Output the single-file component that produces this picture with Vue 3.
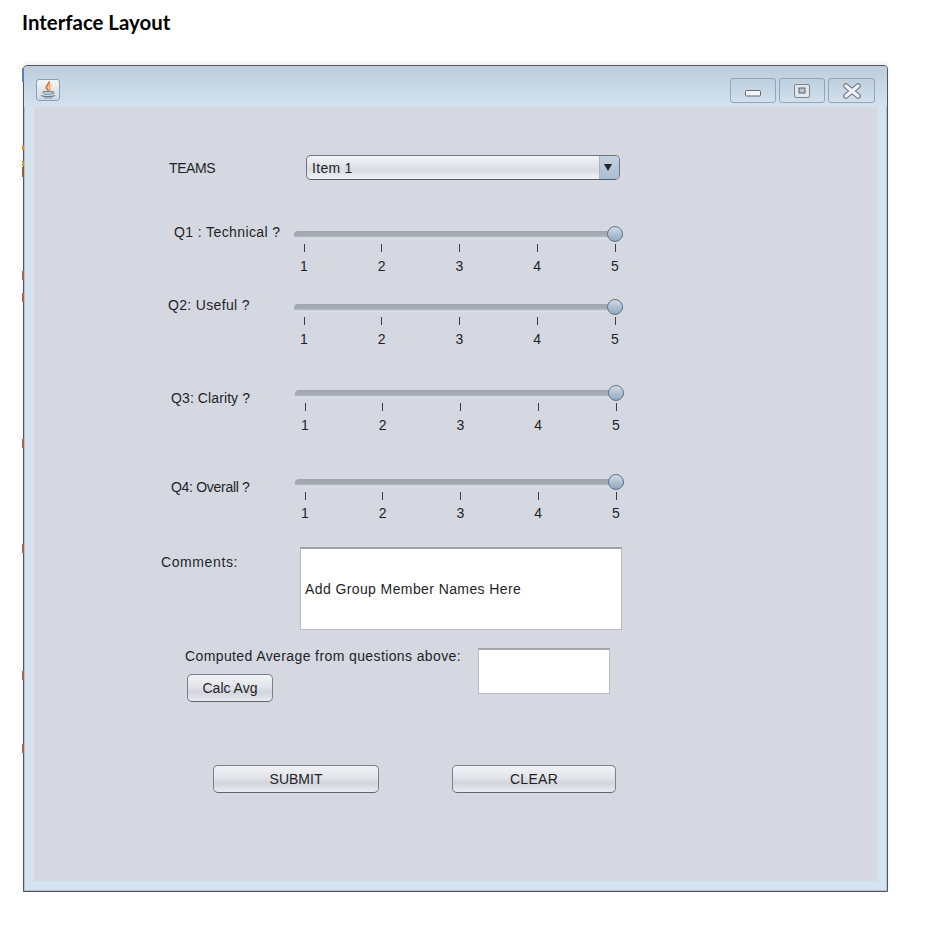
<template>
  <div class="page">
    <h1 class="heading">Interface Layout</h1>

    <div class="window">
      <!-- leftovers of the cropped picture behind the window -->
      <i
        v-for="s in specks"
        :key="s.y"
        class="speck"
        :style="{ top: s.y + 'px', height: s.h + 'px', background: s.color }"
      ></i>

      <div class="titlebar">
        <div class="app-icon">
          <svg width="20" height="20" viewBox="0 0 20 20">
            <path d="M11 1.500c1.500 2.500-3.500 3.500-2.500 6.500.4 1.200 1.700 1.500 1.700 3" fill="none" stroke="#e6762a" stroke-width="2" />
            <path d="M13.500 5c-2 1-3 1.500-2 3 .5.800.6 1.500.2 2.500" fill="none" stroke="#ee9a58" stroke-width="1.300" />
            <path d="M5 11.500h9.500c0 1.600-.8 2.500-2.200 2.700H7.200C5.800 14 5 13.100 5 11.500z" fill="#c3d1dc" stroke="#5f7f98" stroke-width=".9" />
            <path d="M14.500 11.800c2.400-.4 2.400 2.100-.6 2.300" fill="none" stroke="#5f7f98" stroke-width=".9" />
            <path d="M3 15.500c3 1.500 11 1.500 14 0" fill="none" stroke="#5f81a0" stroke-width="1.100" />
            <path d="M6 18h8" stroke="#7f9bb3" stroke-width="1.100" />
          </svg>
        </div>
        <div class="win-buttons">
          <button class="win-btn">
            <svg width="18" height="14" viewBox="0 0 18 14">
              <rect x="1.500" y="6.500" width="15" height="5.500" rx="1" fill="#f4f6f8" stroke="#5d6a76" />
            </svg>
          </button>
          <button class="win-btn">
            <svg width="18" height="16" viewBox="0 0 18 16">
              <rect x="1.500" y="1.500" width="15" height="13" rx="1.500" fill="#e4e7ea" stroke="#7a858f" />
              <rect x="6" y="5" width="6" height="5" fill="#b9c6d3" stroke="#56626e" />
            </svg>
          </button>
          <button class="win-btn close">
            <svg width="20" height="16" viewBox="0 0 20 16">
              <path d="M4 3l12 10M16 3L4 13" fill="none" stroke="#6a747e" stroke-width="5.500" stroke-linecap="round" />
              <path d="M4 3l12 10M16 3L4 13" fill="none" stroke="#eef0f3" stroke-width="3.500" stroke-linecap="round" />
            </svg>
          </button>
        </div>
      </div>

      <div class="content">
        <div class="row teams-row">
          <span class="teams-label">TEAMS</span>
          <div class="combo">
            <span class="combo-text">Item 1</span>
            <span class="combo-arrow"></span>
          </div>
        </div>

        <div v-for="q in questions" :key="q.cls" class="row question" :class="q.cls">
          <span class="q-label">{{ q.label }}</span>
          <div class="slider">
            <div class="track">
              <div class="thumb"></div>
            </div>
            <div class="ticks">
              <div v-for="n in 5" :key="n" class="tick">
                <i></i>
                <span>{{ n }}</span>
              </div>
            </div>
          </div>
        </div>

        <div class="row comments-row">
          <span class="comments-label">Comments:</span>
          <div class="comments-box">Add Group Member Names Here</div>
        </div>

        <div class="row average-row">
          <div class="average-left">
            <span class="average-label">Computed Average from questions above:</span>
            <button class="btn calc">Calc Avg</button>
          </div>
          <div class="average-box"></div>
        </div>

        <div class="row actions">
          <button class="btn submit">SUBMIT</button>
          <button class="btn clear">CLEAR</button>
        </div>
      </div>
    </div>
  </div>
</template>

<script setup>
const questions = [
  { cls: "q1", label: "Q1 : Technical ?" },
  { cls: "q2", label: "Q2: Useful ?" },
  { cls: "q3", label: "Q3: Clarity ?" },
  { cls: "q4", label: "Q4: Overall ?" },
];

const specks = [
  { y: 2, h: 14, color: "#5b83b0" },
  { y: 79, h: 5, color: "#d98a2e" },
  { y: 95, h: 5, color: "#b8a030" },
  { y: 101, h: 10, color: "#9a5a3a" },
  { y: 205, h: 9, color: "#a8674a" },
  { y: 227, h: 9, color: "#a8674a" },
  { y: 373, h: 9, color: "#a8674a" },
  { y: 478, h: 9, color: "#a8674a" },
  { y: 605, h: 9, color: "#a8674a" },
  { y: 678, h: 9, color: "#a8674a" },
];
</script>

<style>
html,
body {
  background: #fff;
}
</style>

<style scoped>
.page {
  width: 940px;
  height: 950px;
  padding: 10px 0 0 22px;
  box-sizing: border-box;
  font-family: "Liberation Sans", Arial, sans-serif;
  font-size: 14px;
  color: #1f1f28;
}

.heading {
  margin: 0 0 31px;
  font-family: Lato, "Open Sans", sans-serif;
  font-size: 20.4px;
  line-height: 24px;
  font-weight: 700;
  color: #000;
}

.window {
  position: relative;
  width: 865px;
  height: 827px;
  margin-left: 1px;
  box-sizing: border-box;
  border: 1px solid #555;
  border-radius: 4px 4px 0 0;
  background: #d5e3f0;
  box-shadow: 0 -3px 4px #f0f2f5, inset 0 0 0 1px #b9c0c7;
  display: flex;
  flex-direction: column;
}

.speck {
  position: absolute;
  left: -2px;
  width: 2px;
}

.titlebar {
  height: 41px;
  flex: none;
  padding: 12px 12px 0 12px;
  box-sizing: border-box;
  background: linear-gradient(#bdcddb, #d3e2ef);
  border-radius: 3px 3px 0 0;
  display: flex;
  justify-content: space-between;
  align-items: flex-start;
}

.app-icon {
  width: 24px;
  height: 22px;
  margin-top: 1px;
  box-sizing: border-box;
  border: 1px solid #8c9fb1;
  border-radius: 3px;
  background: linear-gradient(#f3f5f7, #d0d7de);
  display: flex;
  align-items: center;
  justify-content: center;
}

.win-buttons {
  display: flex;
  gap: 3px;
}

.win-btn {
  width: 46px;
  height: 25px;
  padding: 0;
  border: 1px solid #92a6b9;
  border-radius: 3px;
  background: linear-gradient(#bdcedd, #d2e0ec);
  display: flex;
  align-items: center;
  justify-content: center;
}

.win-btn.close {
  width: 47px;
}

.content {
  flex: none;
  height: 774px;
  margin: 0 10px;
  padding-top: 48px;
  box-sizing: border-box;
  background: #d5d8e0;
}

.row {
  display: flex;
  align-items: flex-start;
}

.teams-row {
  height: 25px;
  align-items: center;
}

.teams-label {
  margin-left: 135px;
  width: 137px;
  letter-spacing: -0.4px;
}

.combo {
  width: 314px;
  height: 25px;
  box-sizing: border-box;
  border: 1px solid #6b7784;
  border-bottom-color: #535d68;
  border-radius: 5px;
  background: linear-gradient(#f4f5f8, #d9dce3 60%, #f0f2f5);
  display: flex;
  align-items: center;
  justify-content: space-between;
  overflow: hidden;
}

.combo-text {
  margin-left: 5px;
  letter-spacing: 0.3px;
}

.combo-arrow {
  width: 19px;
  height: 100%;
  border-left: 1px solid #a7b6c5;
  background: linear-gradient(#c4d2de, #a9bdcf);
  position: relative;
}

.combo-arrow::after {
  content: "";
  position: absolute;
  left: 4px;
  top: 8px;
  border-left: 4px solid transparent;
  border-right: 4px solid transparent;
  border-top: 7px solid #26282c;
}

.question {
  height: 47px;
}

.q-label {
  flex: none;
}

.q1 {
  margin-top: 46px;
}

.q1 .q-label {
  margin: -2px 0 0 140px;
  width: 120px;
  letter-spacing: 0.4px;
}

.q2 {
  margin-top: 26px;
}

.q2 .q-label {
  margin: -2px 0 0 134px;
  width: 126px;
  letter-spacing: 0.33px;
}

.q3 {
  margin-top: 39px;
}

.q3 .q-label {
  margin: 5px 0 0 137px;
  width: 124px;
  letter-spacing: 0.1px;
}

.q4 {
  margin-top: 42px;
}

.q4 .q-label {
  margin: 5px 0 0 137px;
  width: 124px;
  letter-spacing: -0.3px;
}

.slider {
  width: 329px;
  height: 47px;
}

.track {
  position: relative;
  height: 9px;
  margin-top: 5px;
  border-radius: 4px;
  background: linear-gradient(#a0a6ae, #a6acb4 55%, #dfe2e8 80%, #d5d8e0);
}

.thumb {
  position: absolute;
  right: 0;
  top: -5px;
  width: 16px;
  height: 16px;
  box-sizing: border-box;
  border: 1.5px solid #5f7488;
  border-radius: 50%;
  background: linear-gradient(#d0dbe5, #8ea9c2);
}

.ticks {
  margin: 4px 8px 0 10px;
  display: flex;
  justify-content: space-between;
}

.tick {
  width: 0;
  display: flex;
  flex-direction: column;
  align-items: center;
}

.tick i {
  flex: none;
  width: 1px;
  height: 8px;
  background: #3b3b42;
}

.tick span {
  margin-top: 7px;
  font-size: 14px;
  line-height: 15px;
}

.q4 .tick span {
  margin-top: 6px;
}

.comments-row {
  margin-top: 26px;
}

.comments-label {
  margin: 7px 0 0 127px;
  width: 139px;
  flex: none;
  letter-spacing: 0.6px;
}

.comments-box {
  width: 322px;
  height: 83px;
  box-sizing: border-box;
  border: 1px solid #b9bbbf;
  border-top: 2px solid #a0a2a6;
  background: #fff;
  padding-left: 4px;
  display: flex;
  align-items: center;
  letter-spacing: 0.4px;
}

.average-row {
  margin-top: 18px;
  height: 54px;
}

.average-left {
  margin-left: 151px;
  width: 293px;
  flex: none;
  display: flex;
  flex-direction: column;
  align-items: flex-start;
}

.average-label {
  height: 26px;
  line-height: 16px;
  letter-spacing: 0.39px;
}

.average-box {
  width: 132px;
  height: 46px;
  box-sizing: border-box;
  border: 1px solid #b8bbc0;
  border-top: 2px solid #a5a7ac;
  background: #fff;
}

.btn {
  padding: 0;
  box-sizing: border-box;
  border: 1px solid #7a8088;
  border-bottom-color: #5f656d;
  border-radius: 5px;
  background: linear-gradient(#f2f3f6, #e2e4ea 45%, #d2d5dc 65%, #e8eaee);
  font: inherit;
  color: inherit;
  display: flex;
  align-items: center;
  justify-content: center;
}

.calc {
  width: 86px;
  height: 28px;
  margin-left: 2px;
}

.actions {
  margin-top: 63px;
}

.submit {
  width: 166px;
  height: 28px;
  margin-left: 179px;
}

.clear {
  width: 164px;
  height: 28px;
  margin-left: 73px;
  letter-spacing: 0.3px;
}
</style>
